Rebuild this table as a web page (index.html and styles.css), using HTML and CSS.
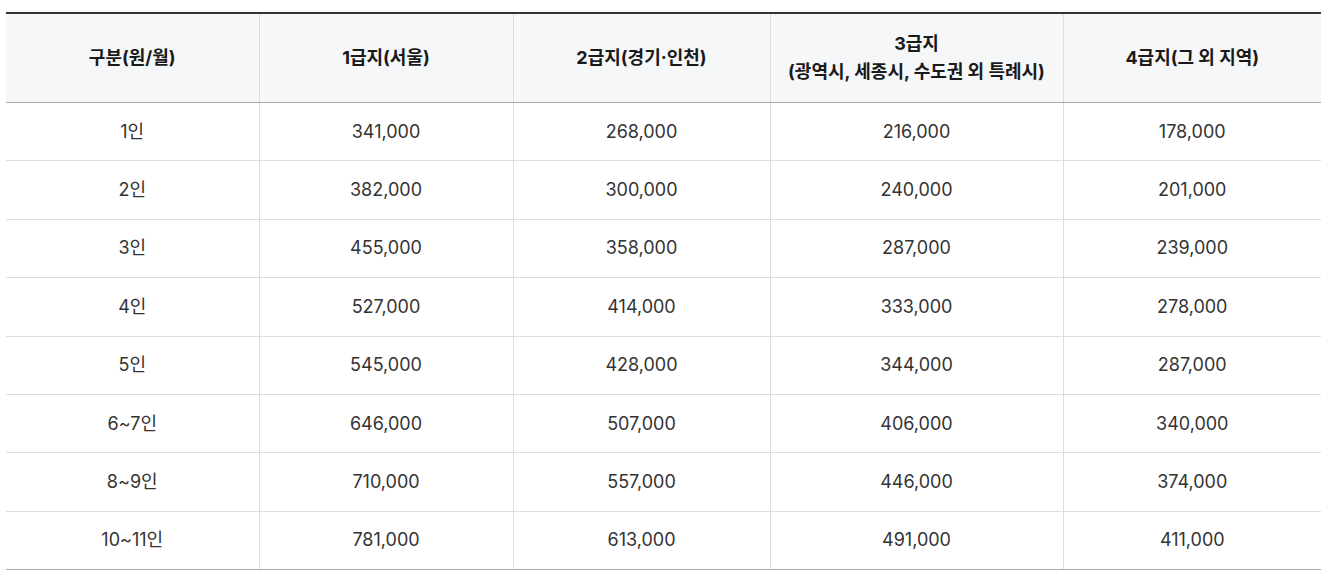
FILE: index.html
```html
<!DOCTYPE html>
<html lang="ko">
<head>
<meta charset="utf-8">
<link rel="stylesheet" href="styles.css">
</head>
<body>
<div class="wrap">
<table class="grid">
  <colgroup>
    <col class="c1"><col class="c2"><col class="c3"><col class="c4"><col class="c5">
  </colgroup>
  <thead>
    <tr>
      <th>구분(원/월)</th>
      <th>1급지(서울)</th>
      <th>2급지(경기·인천)</th>
      <th>3급지<br>(광역시, 세종시, 수도권 외 특례시)</th>
      <th>4급지(그 외 지역)</th>
    </tr>
  </thead>
  <tbody>
    <tr><td>1인</td><td>341,000</td><td>268,000</td><td>216,000</td><td>178,000</td></tr>
    <tr><td>2인</td><td>382,000</td><td>300,000</td><td>240,000</td><td>201,000</td></tr>
    <tr><td>3인</td><td>455,000</td><td>358,000</td><td>287,000</td><td>239,000</td></tr>
    <tr><td>4인</td><td>527,000</td><td>414,000</td><td>333,000</td><td>278,000</td></tr>
    <tr><td>5인</td><td>545,000</td><td>428,000</td><td>344,000</td><td>287,000</td></tr>
    <tr><td>6~7인</td><td>646,000</td><td>507,000</td><td>406,000</td><td>340,000</td></tr>
    <tr><td>8~9인</td><td>710,000</td><td>557,000</td><td>446,000</td><td>374,000</td></tr>
    <tr><td>10~11인</td><td>781,000</td><td>613,000</td><td>491,000</td><td>411,000</td></tr>
  </tbody>
</table>
</div>
</body>
</html>
```

FILE: styles.css
```css
html, body {
  margin: 0;
  padding: 0;
  background: #fff;
}
body {
  font-family: Inter, "Noto Sans CJK KR", "Noto Sans", sans-serif;
  color: #333;
}
.wrap {
  padding: 12px 19px 0 6px;
}
.grid {
  width: 1315px;
  border-collapse: collapse;
  table-layout: fixed;
  border-top: 2px solid #333;
  border-bottom: 1px solid #aaa;
}
.c1 { width: 253px; }
.c2 { width: 254px; }
.c3 { width: 257px; }
.c4 { width: 293px; }
.c5 { width: 258px; }
.grid th {
  background: #f6f7f9;
  color: #1a1a1a;
  font-weight: 700;
  font-size: 18px;
  line-height: 28px;
  height: 88px;
  padding: 0;
  text-align: center;
  vertical-align: middle;
  border-left: 1px solid #ddd;
  border-bottom: 1px solid #aaa;
}
.grid td {
  font-size: 18px;
  line-height: 24px;
  height: 57.4px;
  padding: 0;
  text-align: center;
  vertical-align: middle;
  border-left: 1px solid #ddd;
  border-bottom: 1px solid #ddd;
}
.grid tbody tr:last-child td {
  border-bottom: 1px solid #aaa;
}
.grid th:first-child,
.grid td:first-child {
  border-left: none;
}
```
